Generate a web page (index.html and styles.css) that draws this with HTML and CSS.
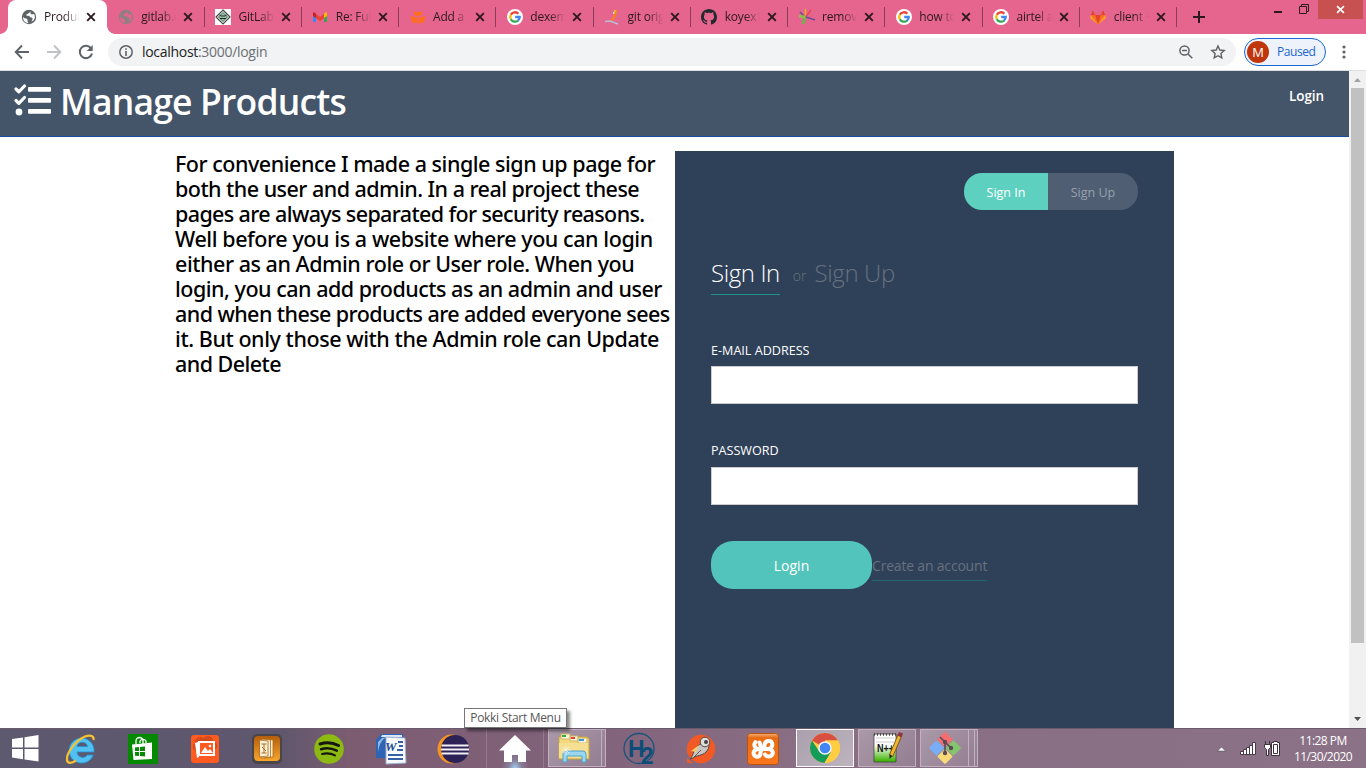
FILE: index.html
```
<!DOCTYPE html>
<html lang="en">
<head>
<meta charset="utf-8">
<title>Products</title>
<link rel="stylesheet" href="styles.css">
</head>
<body>
<svg class="defs" width="0" height="0">
  <symbol id="x" viewBox="0 0 10 10"><path d="M1.2 1.2l7.6 7.6M8.8 1.2L1.2 8.8" stroke="currentColor" stroke-width="1.9" fill="none"/></symbol>
  <symbol id="globe" viewBox="0 0 16 16"><circle cx="8" cy="8" r="7.2" fill="currentColor"/><path d="M9.500 2.500c-1 .5-.8 1.500-2.200 2S4.500 5.800 5.500 6.600s3 0 3.300 1.200c.3 1 1.800.4 2.600 1.300s-.6 2-.8 3.600c2-.9 3.300-2.700 3.300-4.900 0-1-.3-1.800-.7-2.500h-2.400c-.9 0-1.300-.8-1.300-1.400zM2 8c-.1 3.300 2 5.700 5.200 6.100.1-1.100-.1-1.500-.8-1.800.3-1.800-.1-2.700-1.500-2.700C4 9.500 3 9 2 8z" fill="var(--hole)"/></symbol>
  <symbol id="google" viewBox="0 0 16 16"><circle cx="8" cy="8" r="8" fill="#fff"/><g fill="none" stroke-width="2.300"><path d="M3.800 5.800A4.800 4.800 0 0 1 11.400 4.600" stroke="#ea4335"/><path d="M3.800 5.700A4.800 4.800 0 0 0 3.800 10.300" stroke="#fbbc05"/><path d="M3.800 10.200A4.800 4.800 0 0 0 11.200 11.500" stroke="#34a853"/><path d="M11 11.600A4.800 4.800 0 0 0 12.700 8H8.200" stroke="#4285f4"/></g></symbol>
</svg>

<header class="tabs">
  <div class="tab active"><svg class="fav grey-dark"><use href="#globe"/></svg><span class="name">Products</span><svg class="close"><use href="#x"/></svg></div>
  <div class="tab"><svg class="fav grey"><use href="#globe"/></svg><span class="name">gitlab.com</span><svg class="close"><use href="#x"/></svg></div>
  <div class="tab"><svg class="fav" viewBox="0 0 16 16"><path fill="#fff" d="M0 0h16v16H0z"/><path d="M8 1l7 7-7 7-7-7z" fill="none" stroke="#444" stroke-width="1.200"/><path d="M8 3.500L12.500 8 8 12.500 3.500 8z" fill="#9cc7ab" stroke="#35684a"/><path d="M4.500 6l1.500 1h4l1.500-1M5 9.500h6" stroke="#222" fill="none"/></svg><span class="name">GitLab CI</span><svg class="close"><use href="#x"/></svg></div>
  <div class="tab"><svg class="fav" viewBox="0 0 16 16"><path fill="#4285f4" d="M1 4v9h3V6z"/><path fill="#34a853" d="M12 6v7h3V4z"/><path fill="#c5221f" d="M1 4.500V7l3 2V5L2.500 3.300C1.800 3 1 3.500 1 4.500z"/><path fill="#ea4335" d="M4 4.800L8 8l4-3.200V9l-4 3-4-3z"/><path fill="#fbbc04" d="M12 4.800l1.400-1.400C14.300 3 15 3.500 15 4.500V7l-3 2z"/></svg><span class="name">Re: Full Stack</span><svg class="close"><use href="#x"/></svg></div>
  <div class="tab"><svg class="fav" viewBox="0 0 16 16" fill="#ff6d1f"><path d="M.5 7l6.500 1.500v6L1.500 13V9.500L.5 9zM15.500 7L9 8.500v6l5.500-1.500V9.500l1-.5zM4 6l4 1.200L12 6V4l.8-2.500L10.500 3h-5L3.200 1.500 4 4zM7.500 8.500h1v6h-1z"/></svg><span class="name">Add a file</span><svg class="close"><use href="#x"/></svg></div>
  <div class="tab"><svg class="fav"><use href="#google"/></svg><span class="name">dexeme</span><svg class="close"><use href="#x"/></svg></div>
  <div class="tab"><svg class="fav" viewBox="0 0 16 16" fill="none"><path d="M12 1c0 4-1 5-2 7-.6 2-1 3-3 4" stroke="#f58220" stroke-width="2.500"/><path d="M11 1l-1 4" stroke="#f5b340" stroke-width="1.500"/><path d="M1 12.500l5-.5 8 3" stroke="#b7bddb" stroke-width="1.500"/><path d="M9.500 3v2" stroke="#dde"/></svg><span class="name">git origin</span><svg class="close"><use href="#x"/></svg></div>
  <div class="tab"><svg class="fav" viewBox="0 0 16 16"><path fill="#24292e" d="M8 0C3.580 0 0 3.580 0 8c0 3.540 2.290 6.530 5.470 7.590.4.070.55-.17.55-.38 0-.19-.01-.82-.01-1.490-2.010.37-2.530-.49-2.690-.94-.09-.23-.48-.94-.82-1.130-.28-.15-.68-.52-.01-.53.63-.01 1.080.58 1.230.82.72 1.210 1.870.87 2.330.66.070-.52.28-.87.51-1.070-1.780-.2-3.640-.89-3.640-3.950 0-.87.31-1.590.82-2.150-.08-.2-.36-1.020.08-2.120 0 0 .67-.21 2.200.82.64-.18 1.320-.27 2-.27s1.360.09 2 .27c1.530-1.040 2.200-.82 2.200-.82.44 1.100.16 1.920.08 2.120.51.56.82 1.270.82 2.150 0 3.070-1.870 3.750-3.650 3.950.29.25.54.73.54 1.480 0 1.070-.01 1.930-.01 2.200 0 .21.15.46.55.38A8.010 8.010 0 0 0 16 8c0-4.420-3.580-8-8-8z"/></svg><span class="name">koyex1/repo</span><svg class="close"><use href="#x"/></svg></div>
  <div class="tab"><svg class="fav" viewBox="0 0 16 16" fill="none" stroke-width="1.500"><path d="M6 8L1 3" stroke="#6d4d91"/><path d="M6.500 7V0" stroke="#f5a623"/><path d="M7 7.500L12 1" stroke="#ef4056"/><path d="M7 8l9 3" stroke="#6d4d91"/><path d="M6 8l-2 7" stroke="#5dbb46" stroke-width="2.500"/><path d="M6 8L0 7" stroke="#8cc63f" stroke-width="2.500"/></svg><span class="name">remove a</span><svg class="close"><use href="#x"/></svg></div>
  <div class="tab"><svg class="fav"><use href="#google"/></svg><span class="name">how to do</span><svg class="close"><use href="#x"/></svg></div>
  <div class="tab"><svg class="fav"><use href="#google"/></svg><span class="name">airtel app</span><svg class="close"><use href="#x"/></svg></div>
  <div class="tab"><svg class="fav" viewBox="0 0 16 16"><path fill="#fca326" d="M0 9l8 6.500L16 9l-1-3H1z"/><path fill="#fc6d26" d="M.8 6h4.400L8 15.500zM15.200 6h-4.400L8 15.500z"/><path fill="#e24329" d="M5 6h6l-3 9.500zM1 6l1.900-5L5 6zM15 6l-1.900-5L11 6z"/></svg><span class="name">client · main</span><svg class="close"><use href="#x"/></svg></div>
  <svg class="plus" viewBox="0 0 12 12"><path d="M6 0v12M0 6h12" stroke="#2b1820" stroke-width="2"/></svg>
  <div class="win">
    <svg width="10" height="20"><path d="M1 12h8" stroke="#2b1820" stroke-width="2"/></svg>
    <svg width="11" height="20"><path d="M.5 6.500h7v7h-7zM2.500 6V4.500h7v7H8" fill="none" stroke="#2b1820"/></svg>
    <div class="win-close"><svg width="9" height="9"><use href="#x"/></svg></div>
  </div>
</header>

<div class="toolbar">
  <svg class="nav-ic" viewBox="0 0 16 16"><path d="M15 8H2M8 1.500L1.700 8 8 14.500" fill="none" stroke="#5f6368" stroke-width="1.900"/></svg>
  <svg class="nav-ic" viewBox="0 0 16 16"><path d="M1 8h13M8 1.500L14.300 8 8 14.500" fill="none" stroke="#c0c2c5" stroke-width="1.900"/></svg>
  <svg class="nav-ic" viewBox="0 0 16 16"><path d="M13.200 4.500A6.200 6.200 0 1 0 14 9.500" fill="none" stroke="#5f6368" stroke-width="2"/><path d="M14.700 1v6h-6z" fill="#5f6368"/></svg>
  <div class="omnibox">
    <svg width="14" height="14"><circle cx="7" cy="7" r="6.200" fill="none" stroke="#5f6368" stroke-width="1.500"/><path d="M6.200 6h1.600v5H6.200zM6.200 3.200h1.600v1.600H6.200z" fill="#5f6368"/></svg>
    <span class="url"><b>localhost</b>:3000/login</span>
    <svg class="mag" width="14" height="14"><g fill="none" stroke="#5f6368" stroke-width="1.500"><circle cx="5.500" cy="5.500" r="4.600"/><path d="M9 9l4.300 4.300M3 5.500h5"/></g></svg>
    <svg width="14" height="14"><path d="M7 1l1.800 4 4.400.5-3.300 3 .9 4.400L7 10.700l-3.800 2.200.9-4.400-3.300-3L5.200 5z" fill="none" stroke="#5f6368" stroke-width="1.400"/></svg>
  </div>
  <div class="profile"><span class="avatar">M</span><span class="paused">Paused</span></div>
  <svg class="dots" width="4" height="14" fill="#5f6368"><circle cx="2" cy="2" r="1.600"/><circle cx="2" cy="7" r="1.600"/><circle cx="2" cy="12" r="1.600"/></svg>
</div>

<div class="viewport">
  <main class="page">
    <nav class="navbar">
      <svg class="logo" viewBox="0 0 38 32" fill="#fff"><rect x="14" y="3" width="23" height="4.800" rx="1"/><rect x="14" y="14" width="23" height="4.800" rx="1"/><rect x="14" y="25" width="23" height="4.800" rx="1"/><circle cx="5" cy="28" r="3.400"/><path d="M2 5l2.800 2.800L10.500 2M2 16.500l2.800 2.800L10.500 13.500" fill="none" stroke="#fff" stroke-width="3.200" stroke-linecap="round" stroke-linejoin="round"/></svg>
      <h1 class="brand">Manage Products</h1>
      <a class="nav-login">Login</a>
    </nav>
    <div class="columns">
      <p class="intro">
        <span class="l1">For convenience I made a single sign up page for</span>
        <span class="l2">both the user and admin. In a real project these</span>
        <span class="l3">pages are always separated for security reasons.</span>
        <span class="l4">Well before you is a website where you can login</span>
        <span class="l5">either as an Admin role or User role. When you</span>
        <span class="l6">login, you can add products as an admin and user</span>
        <span class="l7">and when these products are added everyone sees</span>
        <span class="l8">it. But only those with the Admin role can Update</span>
        <span class="l9">and Delete</span>
      </p>
      <form class="card">
        <div class="switch"><a class="on">Sign In</a><a class="off">Sign Up</a></div>
        <div class="title"><a class="cur">Sign In</a><span class="or">or</span><a class="other">Sign Up</a></div>
        <label class="label email">E-MAIL ADDRESS</label>
        <input class="field" type="text">
        <label class="label pass">PASSWORD</label>
        <input class="field" type="password">
        <div class="actions"><button class="submit" type="button">Login</button><a class="create">Create an account</a></div>
      </form>
    </div>
  </main>
  <div class="scroll">
    <svg width="17" height="17"><path d="M5 11l3.500-4 3.500 4z" fill="#a3a3a3"/></svg>
    <div class="thumb"></div>
    <svg class="down" width="17" height="17"><path d="M5 6l3.500 4L12 6z" fill="#505050"/></svg>
  </div>
</div>

<footer class="taskbar">
  <div class="start"><svg width="27" height="27" fill="#fff"><path d="M0 4l11-1.600V12.500H0zM12.500 2.200L26.500 0v12.500h-14zM0 14h11v10.200L0 22.600zM12.500 14h14v12.500l-14-2.100z"/></svg></div>
  <div class="slot"><svg width="32" height="32" viewBox="0 0 32 32"><path d="M29 19H12a5.800 5.800 0 0 0 10.500 3h5.800A12.500 12.500 0 1 1 29 16zM12 13.500h10.500A5.400 5.400 0 0 0 12 13.500z" fill="#51c0f2" fill-rule="evenodd" stroke="#2292d2" stroke-width=".8"/><path d="M28.500 7c.8-4-3-5.800-9-3.200C11 7.500 1 20 2 27c.6 4 4.500 3.500 9 .5" fill="none" stroke="#f5c331" stroke-width="2.200"/></svg></div>
  <div class="slot"><svg width="30" height="30"><path fill="#038a00" d="M0 0h30v30H0z"/><path d="M4 10.500L24 8.500V25L5.500 26z" fill="#fff"/><path d="M8 10V7a3.500 3.500 0 0 1 7 0v3M12 9V7a3.500 3.500 0 0 1 6 0v2" fill="none" stroke="#fff" stroke-width="1.300"/><path d="M7 13.500l4-.4v4H7zM12 13l5-.5v4.600h-5zM7 18h4v4l-4-.3zM12 18h5v4.600l-5-.5z" fill="#038a00"/></svg></div>
  <div class="slot"><svg width="30" height="30"><rect x="1" y="1" width="28" height="28" rx="3" fill="#ff5a1f"/><g fill="#d54b1c"><circle cx="10" cy="8" r="5"/><circle cx="18" cy="7" r="5"/><circle cx="23" cy="12" r="4"/><circle cx="7" cy="13" r="4"/></g><path d="M5 9l3-1 1 15-2 1z" fill="#fff"/><path d="M8 7h17v15H8z" fill="#fff"/><path d="M10 9h13v11H10z" fill="#ff5a1f"/><path d="M11 19l4-6 3 4 2-2 3 4z" fill="#fff"/><circle cx="20" cy="12" r="1.300" fill="#fff"/></svg></div>
  <div class="slot"><svg width="30" height="30"><defs><linearGradient id="or" x2="0" y2="1"><stop stop-color="#b45d0b"/><stop offset="1" stop-color="#f7a52e"/></linearGradient></defs><rect width="30" height="30" rx="5" fill="#494548"/><rect x="2" y="2" width="26" height="25" rx="4" fill="url(#or)"/><g fill="#f7efd8" stroke="#ae660f" stroke-width=".8"><path d="M12 5l9 1v17l-9 1z"/><path d="M9.500 5l9 1v17l-9 1z"/><path d="M7.500 6l8.500 1v15l-8.500 1z"/></g><path d="M9.500 10h5M10 13l4 4M9.500 19h5M12 10v9" stroke="#b06f1b" fill="none"/></svg></div>
  <div class="slot"><svg width="30" height="30"><circle cx="15" cy="15" r="14.800" fill="#8cba12"/><g fill="none" stroke="#16180f" stroke-linecap="round"><path d="M6 10c6-2 13-1.500 18.500 1.500" stroke-width="3"/><path d="M7 15.200c5.500-1.600 11-1 15.800 1.500" stroke-width="2.500"/><path d="M8 20c5-1.200 9-.8 13 1.400" stroke-width="2"/></g></svg></div>
  <div class="slot"><svg width="32" height="32"><path d="M6 1h22v24H1V7z" fill="#2e64b4"/><path d="M7 2h20v2H6z" fill="#dce8f8"/><path d="M3 20C4 10 8 5 13 4l-6 1-4 4z" fill="#91b8e6"/><path d="M11 4l19 1 1 25-20 1z" fill="#f7f9fd" stroke="#9db3d5"/><path d="M23 9h5M24 13h4M22 17h6M13 22h15M13 26h15" stroke="#3660a6" stroke-width="2"/><text x="10" y="18" class="word-w">W</text></svg></div>
  <div class="slot"><svg width="32" height="30"><ellipse cx="14.500" cy="15" rx="14" ry="14.500" fill="#f7941e"/><circle cx="18" cy="15" r="14" fill="#2c2255"/><path d="M4.500 11.500h27M4 15.500h28M4.500 19.500h27" stroke="#f3f1f8" stroke-width="2"/></svg></div>
  <div class="slot pokki"><svg width="32" height="30"><path d="M16 1L0 16.500h5V28h8v-7h6v7h8V16.500h5z" fill="#fff"/></svg></div>
  <div class="slot framed explorer"><svg width="32" height="32"><path d="M1 5h28l2 2v20H1z" fill="#f4da7c" stroke="#c8a540"/><path d="M3 2h9v5H3zM12 4h8v5h-8zM20 6h9v5h-9z" fill="#f9f6df" stroke="#cfb45c"/><path d="M4 3h4v2H4z" fill="#38a83a"/><path d="M13 5h4v2h-4z" fill="#df4136"/><path d="M21 7h5v2h-5z" fill="#3b96df"/><path d="M1 11h29v15H1z" fill="#f5df92"/><path d="M5 30V23c0-3 1-4 4-4h15c3 0 4 1 4 4v7h-4v-6H9v6z" fill="#9bd5f0" stroke="#4ba5cb"/><path d="M8 14v9M3 18h10M5 15l6 6M11 15l-6 6" stroke="#fff" stroke-width=".8" opacity=".8"/></svg></div>
  <div class="slot"><svg width="32" height="32"><circle cx="16" cy="15.500" r="15" fill="none" stroke="#17527b" stroke-width="1.300"/><text x="5" y="24" class="h2">H<tspan dx="-4" dy="7">2</tspan></text></svg></div>
  <div class="slot"><svg width="30" height="30"><circle cx="15" cy="15" r="14.200" fill="#f15a24"/><path d="M1 24v5h6z" fill="#f15a24"/><path d="M4 25C8 22 7 12 17 9c6-1 8 4 3 9-4 4-9 3-13 6z" fill="#c7c6c5" stroke="#594740"/><path d="M5 17l8-6-3 7z" fill="#f7ca6d"/><circle cx="19" cy="8" r="4.800" fill="#ddd" stroke="#594740"/><circle cx="20" cy="8" r="2" fill="#444"/><path d="M8 23l7-7" stroke="#675750"/></svg></div>
  <div class="slot"><svg width="32" height="32"><defs><linearGradient id="xa" x2="0" y2="1"><stop stop-color="#f6b17a"/><stop offset=".14" stop-color="#e86b12"/><stop offset="1" stop-color="#fb761c"/></linearGradient></defs><rect x=".5" y=".5" width="31" height="31" rx="3" fill="url(#xa)" stroke="#b9540f"/><g fill="none" stroke="#fff" stroke-width="4" stroke-linecap="round" stroke-linejoin="round"><path d="M8.500 9c-2.500 3-.5 7 3.500 7-5 0-6.500 4-4.500 6.500 2 2 6 1.500 6-2.500 0-3 1-4 3-4h6"/><path d="M12 16c3 0 5.500-.5 5.500-3.500 0-5 6.500-6 7.500-2.500 1 3-1 6-4 6 4 0 6 3 4 6-1.500 2-5.500 2-7-.5M12.500 9.500c.8 1.500.5 3 1.500 5"/></g></svg></div>
  <div class="slot framed bright"><svg width="30" height="30"><circle cx="15" cy="15" r="15" fill="#ffcd42"/><path d="M15 15L2 7.500A15 15 0 0 1 28 7.500H15z" fill="#d94f42"/><path d="M2 7.500A15 15 0 0 0 14.500 30L21 19l-6-4-6 3z" fill="#159c58"/><path d="M15 7.500h13A15 15 0 0 1 14.500 30L21 19z" fill="#ffcd42"/><circle cx="15" cy="15" r="6.800" fill="#f5f5f5"/><circle cx="15" cy="15" r="5.300" fill="#4285f4"/></svg></div>
  <div class="slot framed"><svg width="32" height="32"><defs><linearGradient id="np" x2="0" y2="1"><stop offset=".4" stop-color="#fff"/><stop offset=".95" stop-color="#45b70d"/></linearGradient></defs><path d="M3 2h22v28H3z" fill="url(#np)" stroke="#333" stroke-width=".7"/><path d="M3 2.500h22" stroke="#444" stroke-width="2.500" stroke-dasharray="1 2"/><path d="M5 6h18M5 10h18" stroke="#ccc"/><text x="6" y="20" class="npp" textLength="17" lengthAdjust="spacingAndGlyphs">N++</text><path d="M29 3L20 24" stroke="#76501b" stroke-width="4.500"/><path d="M29 3L20 24" stroke="#efb72d" stroke-width="3"/><path d="M28 0l4 1.500-1.500 4-4-2z" fill="#8f3440"/><path d="M18.500 22l3 2-3 3z" fill="#222"/></svg></div>
  <div class="slot framed git"><svg width="32" height="32"><g transform="rotate(45 16 16)"><rect x="4.500" y="4.500" width="11" height="11" rx="1" fill="#f66e70"/><rect x="16.500" y="4.500" width="11" height="11" rx="1" fill="#84c66b"/><rect x="4.500" y="16.500" width="11" height="11" rx="1" fill="#79aef7"/><rect x="16.500" y="16.500" width="11" height="11" rx="1" fill="#f8da78"/></g><path d="M11 5l5 5v11M16 10l6 6" stroke="#594b58" stroke-width="1.600" fill="none"/><g fill="#594b58"><circle cx="16" cy="10" r="2.200"/><circle cx="22" cy="16" r="2.200"/><circle cx="16" cy="21" r="2.200"/></g></svg></div>
  <div class="tray">
    <svg width="9" height="6"><path d="M.5 5L4.500 1l4 4z" fill="#fff" stroke="#4d3f52" stroke-width=".5"/></svg>
    <svg class="signal" width="17" height="13"><g fill="#fff" stroke="#4b3b49"><path d="M.5 9.500h3v3h-3zM3.500 7.500h3v5h-3zM6.500 5.500h3v7h-3zM9.500 3.500h3v9h-3zM12.500.5h3v12h-3z"/></g></svg>
    <svg width="17" height="17"><path d="M7.500 2.500h2v-1h4v1h2v13h-8z" fill="#fff" stroke="#3f303d"/><path d="M9.500 4.500h4v9h-4z" fill="#fff" stroke="#3f303d"/><path d="M1.500 1v3M5.500 1v3M.5 4.500h6v3l-2 2v6h-2v-6l-2-2z" fill="#fff" stroke="#3f303d"/></svg>
    <div class="clock"><span class="time">11:28 PM</span><span class="date">11/30/2020</span></div>
  </div>
</footer>
<div class="tooltip">Pokki Start Menu</div>
</body>
</html>
```
FILE: styles.css
```
* { box-sizing: border-box; }
body {
  margin: 0; width: 1366px; height: 768px; overflow: hidden;
  display: flex; flex-direction: column;
  font-family: "Open Sans", "Noto Sans", sans-serif; background: #fff;
}
svg { display: block; flex: none; overflow: visible; }
.defs { position: absolute; }

/* tab strip */
.tabs { height: 34px; flex: none; display: flex; padding-left: 8px; background: #e6658f; color: #2b1820; position: relative; }
.tab { width: 97.250px; height: 34px; flex: none; display: flex; align-items: center; padding-left: 12.500px; position: relative; --hole: #e6658f; }
.tab + .tab::after { content: ""; position: absolute; right: -2px; top: 7px; width: 1px; height: 20px; background: #8b3d57; }
.tab.active { --hole: #fff; }
.tab.active::before { content: ""; position: absolute; left: 0; top: 0; width: 99px; height: 34px; background: #fff; border-radius: 8px 8px 0 0; }
.tab.active::after { content: ""; position: absolute; left: -8px; bottom: 0; width: 115px; height: 8px; background: radial-gradient(circle at 0 0, transparent 7.500px, #fff 8px) left / 8px 8px no-repeat, radial-gradient(circle at 100% 0, transparent 7.500px, #fff 8px) right / 8px 8px no-repeat; }
.fav { width: 16px; height: 16px; position: relative; }
.grey-dark { color: #5f6368; }
.grey { color: #8e7f84; }
.name { width: 36px; margin-left: 7.500px; font-size: 12px; line-height: 16px; letter-spacing: -.2px; white-space: nowrap; overflow: hidden; position: relative; -webkit-mask-image: linear-gradient(90deg, #000 55%, transparent 98%); mask-image: linear-gradient(90deg, #000 55%, transparent 98%); }
.close { width: 10px; height: 10px; margin-left: 6px; position: relative; }
.plus { width: 12px; height: 12px; margin: 11px 0 0 18px; }
.win { display: flex; margin-left: auto; }
.win > svg + svg { margin-left: 16px; }
.win-close { width: 45px; height: 19px; margin: 0 3px 0 8px; background: #c75050; color: #fff; display: flex; align-items: center; justify-content: center; }

/* toolbar */
.toolbar { height: 37px; flex: none; display: flex; align-items: center; padding: 0 20px 1px 14px; border-bottom: 1px solid #dcdee1; }
.nav-ic { width: 16px; height: 16px; margin-right: 16px; }
.omnibox { width: 1128px; height: 28px; margin-left: -2px; padding: 0 11px; background: #f1f3f4; border-radius: 14px; display: flex; align-items: center; }
.url { margin-left: 9px; font-size: 14px; color: #6b6f73; letter-spacing: -.3px; }
.url b { font-weight: 400; color: #202124; }
.mag { margin: 0 18px 0 auto; }
.profile { width: 82px; height: 28px; margin-left: 8px; padding-left: 2px; border: 1px solid #1967d2; border-radius: 14px; background: #eef2fa; display: flex; align-items: center; }
.avatar { width: 22px; height: 22px; border-radius: 50%; background: #bf360c; color: #fff; font-size: 13px; line-height: 22px; text-align: center; }
.paused { margin-left: 8px; color: #1967d2; font-size: 12px; letter-spacing: -.45px; }
.dots { margin-left: auto; }

/* page */
.viewport { height: 657px; flex: none; display: flex; }
.page { width: 1349px; overflow: hidden; }
.navbar { height: 66px; display: flex; align-items: flex-start; padding: 13px 25px 0 14px; background: #445469; border-bottom: 1px solid #1a4ba0; color: #fff; }
.logo { width: 38px; height: 32px; }
.brand { margin: -8px 0 0 8px; font-size: 35.500px; line-height: 50px; font-weight: 600; letter-spacing: -.82px; }
.nav-login { margin: 3px 0 0 auto; font-size: 13.500px; line-height: 19px; font-weight: 600; letter-spacing: -.1px; }
.columns { display: flex; padding: 14px 0 0 175px; }
.intro { margin: 0; width: 500px; font-family: "Noto Sans", "Open Sans", sans-serif; font-size: 21.500px; line-height: 25px; font-weight: 500; color: #000; }
.intro span { display: block; white-space: nowrap; }
.l1 { letter-spacing: -.48px; }
.l2 { letter-spacing: -.53px; }
.l3 { letter-spacing: -.62px; }
.l4 { letter-spacing: -.42px; }
.l5 { letter-spacing: -.46px; }
.l6 { letter-spacing: -.49px; }
.l7 { letter-spacing: -.57px; }
.l8 { letter-spacing: -.43px; }
.l9 { letter-spacing: -.55px; }
.card { width: 499px; height: 577px; padding: 22px 36px 0; background: #2f4159; display: flex; flex-direction: column; align-items: flex-start; }
.switch { width: 174px; height: 37px; align-self: flex-end; display: flex; border-radius: 18px; overflow: hidden; font-size: 12.500px; line-height: 39px; text-align: center; }
.on { width: 84px; background: #5ed0c0; color: #fff; font-weight: 500; }
.off { flex: 1; background: #4f5e73; color: #97a1ae; }
.title { height: 41px; margin-top: 44px; display: flex; font-weight: 300; font-size: 24px; line-height: 37px; letter-spacing: -.4px; color: #66717f; }
.cur { border-bottom: 1px solid #1f9385; color: #fff; }
.or { margin: 3px 8px 0 13px; font-size: 14px; letter-spacing: 0; }
.other { letter-spacing: -.35px; }
.label { height: 18px; font-size: 12.600px; line-height: 20px; color: #fff; font-weight: 500; }
.email { margin-top: 46px; }
.pass { margin-top: 37px; }
.field { width: 427px; height: 38px; margin-top: 7px; border: 1px solid #ccc; background: #fff; outline: 0; }
.field + .pass + .field { margin-top: 8px; }
.actions { margin-top: 36px; display: flex; align-items: flex-start; }
.submit { width: 161px; height: 48px; padding: 1px 0 0; border: 0; border-radius: 22px; background: #53c4bb; color: #fff; font: 500 14px "Open Sans", sans-serif; }
.create { margin-top: 14px; height: 26px; border-bottom: 1px solid #23666b; font-size: 14px; line-height: 22px; letter-spacing: -.19px; color: #66717f; }

.scroll { width: 17px; background: #f1f1f1; display: flex; flex-direction: column; }
.thumb { width: 13px; height: 555px; margin-left: 2px; background: #c1c1c1; }
.down { margin-top: auto; }

/* taskbar */
.taskbar { height: 40px; flex: none; display: flex; border-top: 1px solid #695a6c; background: linear-gradient(90deg, #5d596f 0, #5f576d 280px, #7c5c71 350px, #80627a 560px, #896e84 800px, #8b7287 100%); }
.start { width: 50px; padding: 6px 0 0 12px; }
.slot { width: 62px; height: 39px; flex: none; display: flex; align-items: center; justify-content: center; position: relative; }
.framed { width: 58px; height: 38px; margin: 0 2px; border: 1px solid #c1b0bd; background: linear-gradient(135deg, #aa99a8, #937d91); }
.bright { border: 1px solid #fff; background: linear-gradient(135deg, #aaa0ad, #beb4bf); }
.explorer { padding-right: 6px; }
.explorer::after { content: ""; position: absolute; right: 3px; top: 0; bottom: 0; border-left: 1px solid #c1b0bd; }
.git { padding-right: 8px; }
.git::after { content: ""; position: absolute; right: 2px; top: 0; bottom: 0; width: 5px; border: solid #c1b0bd; border-width: 0 1px; }
.pokki { background: radial-gradient(ellipse at 50% 105%, #a7dcff 0, #9096b580 18%, transparent 36%); border: solid #947b8c; border-width: 0 1px; width: 58px; margin: 0 2px; }
.word-w { font: italic 700 13px "Liberation Serif", serif; fill: #244c94; }
.h2 { font: 700 23px "Liberation Sans", sans-serif; fill: #0d4d78; }
.npp { font: 700 11px "Liberation Sans", sans-serif; fill: #111; }
.tray { margin-left: auto; display: flex; align-items: center; padding-right: 13px; color: #fff; }
.signal { margin: 0 7px 0 14px; }
.clock { width: 60px; margin-left: 12px; font-size: 12px; line-height: 16px; letter-spacing: -.55px; text-align: center; display: flex; flex-direction: column; white-space: nowrap; }

.tooltip { position: absolute; left: 464px; top: 708px; width: 103px; height: 20px; border: 1px solid #767676; background: #fff; color: #575757; font-size: 12px; line-height: 18px; letter-spacing: -.3px; text-align: center; white-space: nowrap; box-shadow: 3px 3px 3px #0007; }
```
